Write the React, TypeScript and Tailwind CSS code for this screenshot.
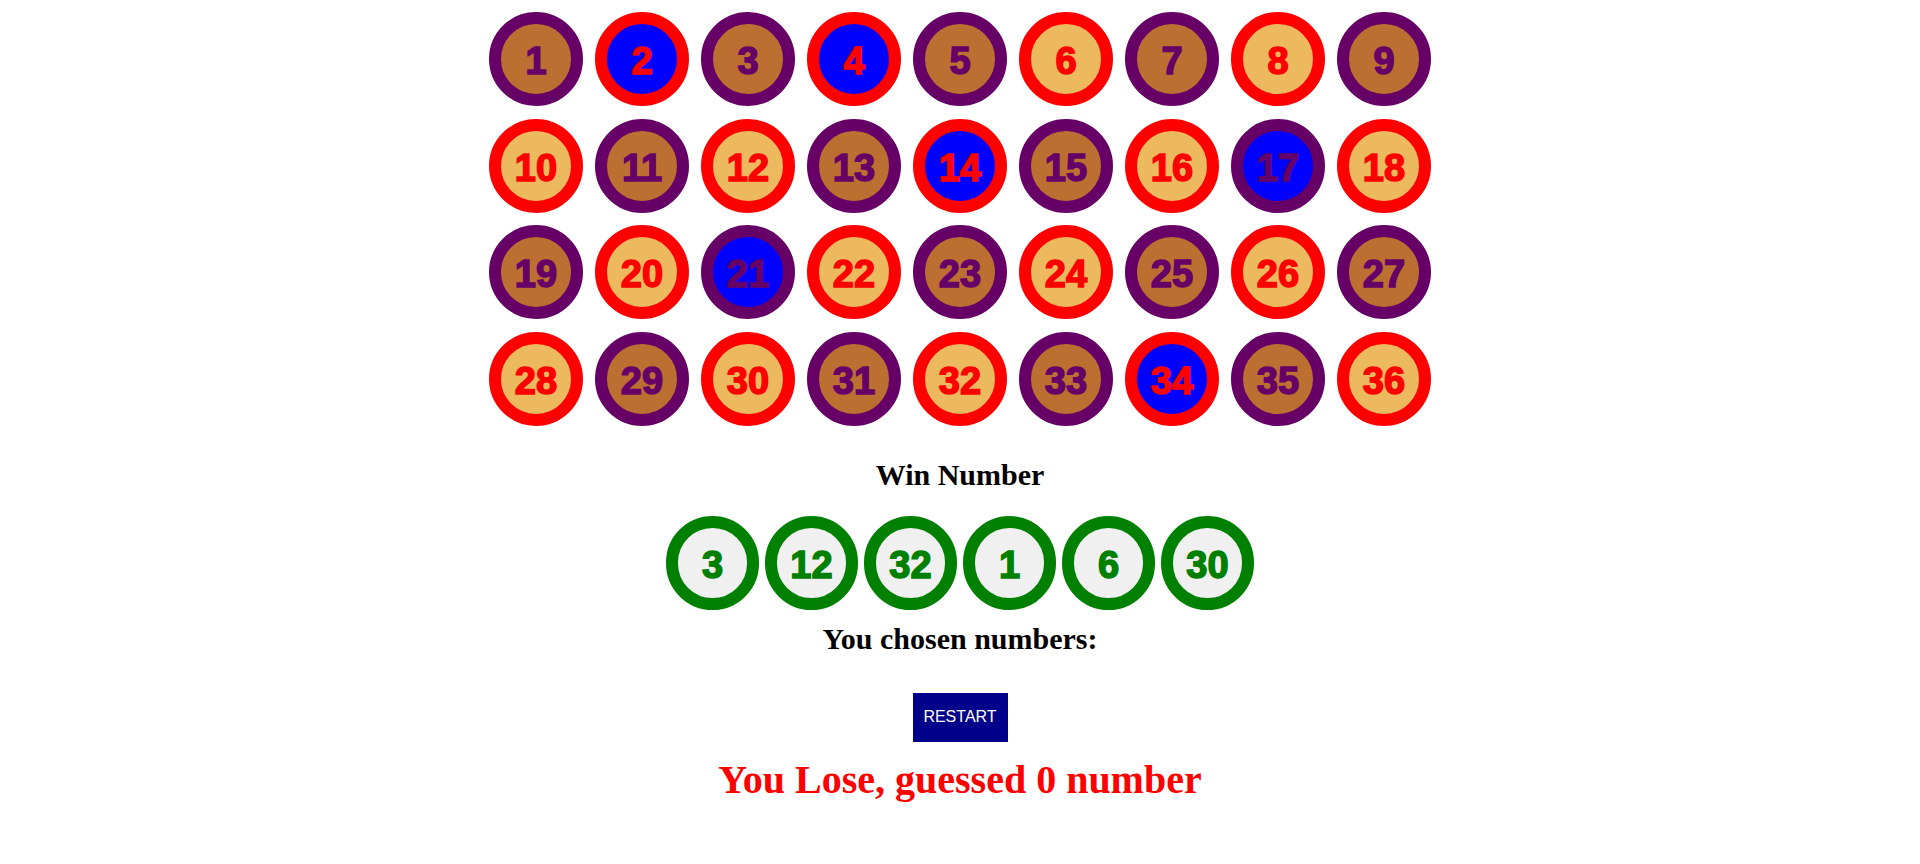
import React from 'react';

const selected = [2, 4, 14, 17, 21, 34];
const winNumbers = [3, 12, 32, 1, 6, 30];

const Ball: React.FC<{ n: number }> = ({ n }) => {
  const odd = n % 2 === 1;
  const picked = selected.includes(n);
  const ring = odd ? 'border-[#660066] text-[#660066]' : 'border-[#ff0000] text-[#ff0000]';
  const fill = picked ? 'bg-[#0000ff]' : odd ? 'bg-[#bd6f32]' : 'bg-[#edb95e]';
  return (
    <div
      className={`w-[94px] h-[94px] rounded-full border-[12px] flex items-center justify-center font-bold text-[38px] leading-none pt-[4px] [-webkit-text-stroke:1.5px_currentColor] font-['Liberation_Sans',Arial,sans-serif] ${ring} ${fill}`}
    >
      {n}
    </div>
  );
};

export default function App() {
  const nums = Array.from({ length: 36 }, (_, i) => i + 1);
  return (
    <div className="w-full min-h-[864px] bg-white flex flex-col items-center pt-[12px]">
      <div className="grid grid-cols-9 gap-x-[12px] gap-y-[12.5px]">
        {nums.map(n => (
          <Ball key={n} n={n} />
        ))}
      </div>

      <h3 className="mt-[32px] text-[30px] leading-[34px] font-bold text-black font-['Liberation_Serif','Times_New_Roman',serif]">
        Win Number
      </h3>

      <div className="mt-[24px] flex gap-[6px]">
        {winNumbers.map(n => (
          <div
            key={n}
            className="w-[93px] h-[94px] rounded-full border-[12px] border-[#008000] bg-[#f0f0f0] text-[#008000] flex items-center justify-center font-bold text-[38px] leading-none pt-[4px] [-webkit-text-stroke:1.5px_currentColor] font-['Liberation_Sans',Arial,sans-serif]"
          >
            {n}
          </div>
        ))}
      </div>

      <h3 className="mt-[12px] text-[30px] leading-[34px] font-bold text-black font-['Liberation_Serif','Times_New_Roman',serif]">
        You chosen numbers:
      </h3>

      <button className="mt-[37px] w-[95px] h-[49px] bg-[#00008b] text-white text-[16px] flex items-center justify-center font-['Liberation_Sans',Arial,sans-serif]">
        RESTART
      </button>

      <h1 className="mt-[15px] text-[40px] leading-[46px] font-bold text-[#ff0000] font-['Liberation_Serif','Times_New_Roman',serif]">
        You Lose, guessed 0 number
      </h1>
    </div>
  );
}
